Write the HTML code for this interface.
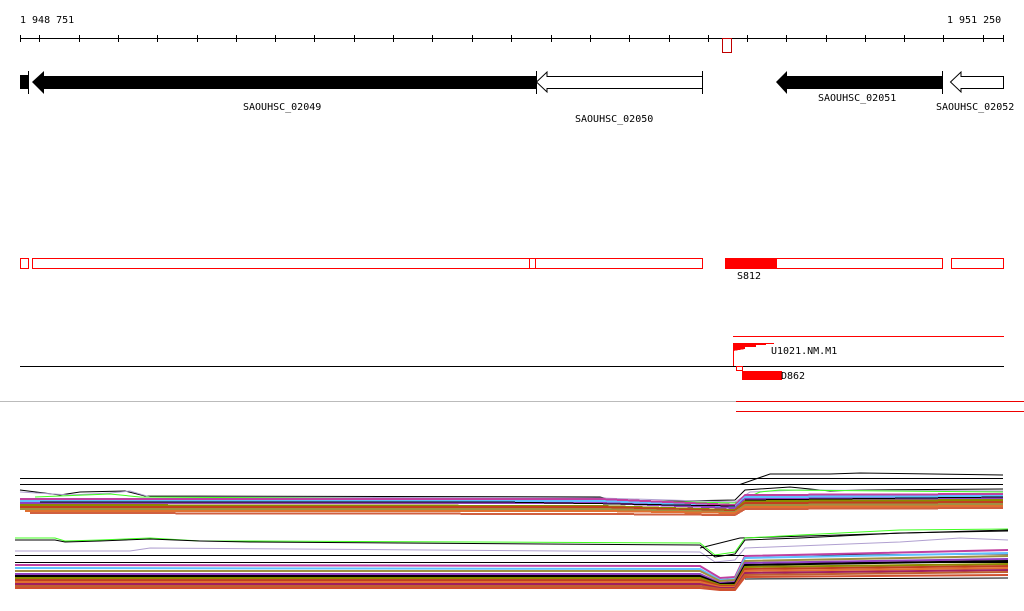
<!DOCTYPE html>
<html><head><meta charset="utf-8"><style>
html,body{margin:0;padding:0;background:#fff;width:1024px;height:611px;overflow:hidden}
svg{display:block}
text{font-family:"DejaVu Sans Mono","Liberation Mono",monospace;font-size:10px;fill:#000}
</style></head><body>
<svg width="1024" height="611" viewBox="0 0 1024 611" xmlns="http://www.w3.org/2000/svg" shape-rendering="crispEdges">
<text x="20" y="23">1 948 751</text>
<text x="947" y="23">1 951 250</text>
<line x1="20" y1="38.5" x2="1004" y2="38.5" stroke="#000"/>
<g stroke="#000">
<line x1="20.5" y1="35" x2="20.5" y2="42"/><line x1="1003.5" y1="35" x2="1003.5" y2="42"/>
<line x1="39.5" y1="35" x2="39.5" y2="42"/><line x1="79.5" y1="35" x2="79.5" y2="42"/><line x1="118.5" y1="35" x2="118.5" y2="42"/><line x1="157.5" y1="35" x2="157.5" y2="42"/><line x1="197.5" y1="35" x2="197.5" y2="42"/><line x1="236.5" y1="35" x2="236.5" y2="42"/><line x1="275.5" y1="35" x2="275.5" y2="42"/><line x1="314.5" y1="35" x2="314.5" y2="42"/><line x1="354.5" y1="35" x2="354.5" y2="42"/><line x1="393.5" y1="35" x2="393.5" y2="42"/><line x1="432.5" y1="35" x2="432.5" y2="42"/><line x1="472.5" y1="35" x2="472.5" y2="42"/><line x1="511.5" y1="35" x2="511.5" y2="42"/><line x1="551.5" y1="35" x2="551.5" y2="42"/><line x1="590.5" y1="35" x2="590.5" y2="42"/><line x1="629.5" y1="35" x2="629.5" y2="42"/><line x1="669.5" y1="35" x2="669.5" y2="42"/><line x1="708.5" y1="35" x2="708.5" y2="42"/><line x1="747.5" y1="35" x2="747.5" y2="42"/><line x1="786.5" y1="35" x2="786.5" y2="42"/><line x1="826.5" y1="35" x2="826.5" y2="42"/><line x1="865.5" y1="35" x2="865.5" y2="42"/><line x1="904.5" y1="35" x2="904.5" y2="42"/><line x1="943.5" y1="35" x2="943.5" y2="42"/><line x1="983.5" y1="35" x2="983.5" y2="42"/>
</g>
<rect x="722.5" y="38.5" width="9" height="14" fill="#fff" stroke="#c00000"/>

<!-- genes -->
<rect x="20" y="75" width="8" height="14" fill="#000"/>
<line x1="28.5" y1="71" x2="28.5" y2="94" stroke="#000"/>
<polygon points="32,82 44,71 44,76 536,76 536,89 44,89 44,94" fill="#000" shape-rendering="auto"/>
<polygon points="536.5,82 547,72 547,76.5 702.5,76.5 702.5,88.5 547,88.5 547,92" fill="#fff" stroke="#000" shape-rendering="auto"/>
<line x1="536.5" y1="71" x2="536.5" y2="94" stroke="#000"/>
<line x1="702.5" y1="71" x2="702.5" y2="94" stroke="#000"/>
<polygon points="776,82 787,71 787,76 942,76 942,89 787,89 787,94" fill="#000" shape-rendering="auto"/>
<line x1="942.5" y1="71" x2="942.5" y2="94" stroke="#000"/>
<polygon points="950.5,82 961,72 961,76.5 1003.5,76.5 1003.5,88.5 961,88.5 961,92" fill="#fff" stroke="#000" shape-rendering="auto"/>
<text x="243" y="110">SAOUHSC_02049</text>
<text x="575" y="122">SAOUHSC_02050</text>
<text x="818" y="101">SAOUHSC_02051</text>
<text x="936" y="110">SAOUHSC_02052</text>

<!-- red boxes -->
<g fill="#fff" stroke="#f00">
<rect x="20.5" y="258.5" width="8" height="10"/>
<rect x="32.5" y="258.5" width="497" height="10"/>
<rect x="529.5" y="258.5" width="6" height="10"/>
<rect x="535.5" y="258.5" width="167" height="10"/>
<rect x="725.5" y="258.5" width="217" height="10"/>
<rect x="951.5" y="258.5" width="52" height="10"/>
</g>
<rect x="725" y="258" width="52" height="11" fill="#f00"/>
<text x="737" y="279">S812</text>

<line x1="733" y1="336.5" x2="1004" y2="336.5" stroke="#f00"/>
<polygon points="733,343 774,343 774,344 766,344 766,345 756,345 756,347 745,347 745,349 733,351" fill="#f00"/>
<line x1="733.5" y1="343" x2="733.5" y2="366" stroke="#f00"/>
<text x="771" y="354">U1021.NM.M1</text>
<line x1="20" y1="366.5" x2="1004" y2="366.5" stroke="#000"/>
<rect x="736.5" y="366.5" width="6" height="4" fill="#fff" stroke="#f00"/>
<rect x="742" y="371" width="40" height="9" fill="#f00"/>
<text x="781" y="379">D862</text>

<line x1="0" y1="401.5" x2="1024" y2="401.5" stroke="#999"/>
<line x1="736" y1="401.5" x2="1024" y2="401.5" stroke="#e00"/>
<line x1="0" y1="401.5" x2="736" y2="401.5" stroke="#bbb"/>
<line x1="736" y1="411.5" x2="1024" y2="411.5" stroke="#e00"/>

<!-- upper band -->
<g fill="none" stroke-width="1" shape-rendering="crispEdges">
<polyline points="20,478.5 1003,478.5" stroke="#000"/>
<polyline points="20,484.5 1003,484.5" stroke="#000"/>
<polyline points="740,484.5 770,474 830,474 860,473 1003,475" stroke="#000" shape-rendering="auto"/>
<polyline points="20,490 60,495 80,492 125,491 145,496 600,497 620,502 735,500 745,490 790,487 830,491 860,490 1003,489" stroke="#000" shape-rendering="auto"/>
<polyline points="20,492 70,495 110,493 130,491 150,497 600,498 735,502 750,492 800,490 1003,491" stroke="#b0a0d0" shape-rendering="auto"/>
<polyline points="35,497 110,494 140,497 600,500 735,503 760,492 780,490 1003,492" stroke="#40ff20" shape-rendering="auto"/>
</g>
<g stroke-width="2" fill="none">
<polyline points="20,499 600,499 735,505 745,495 1003,494" stroke="#c040a0"/>
<polyline points="20,501 600,501 735,507 745,497 1003,496" stroke="#60c0ff"/>
<polyline points="20,503 600,503 735,508 745,499 1003,498" stroke="#9040c0"/>
<polyline points="20,505 600,506 735,510 745,501 1003,500" stroke="#8b8b00"/>
<polyline points="20,507 600,507 735,511 745,503 1003,502" stroke="#c04020"/>
<polyline points="20,509 600,509 735,512 745,505 1003,504" stroke="#a09040"/>
<polyline points="25,511 600,511 735,513 745,507 1003,506" stroke="#e07030"/>
<polyline points="30,513 600,514 735,515 745,509 1003,508" stroke="#d06040"/>
<polyline points="40,502 500,502 735,506" stroke="#000" stroke-width="1"/>
<polyline points="745,500 1003,497" stroke="#000" stroke-width="1"/>
</g>

<!-- lower band -->
<g fill="none" stroke-width="1" shape-rendering="auto">
<polyline points="700,548 740,538 1008,530" stroke="#000"/>
<polyline points="15,538 55,538 65,541 100,540 150,538 200,541 250,541 700,543 715,555 735,552 745,538 800,535 900,530 1008,529" stroke="#40ff20"/>
<polyline points="15,540 55,540 65,542 100,541 150,539 200,541 250,542 700,545 715,557 735,554 745,540 800,538 900,533 1008,531" stroke="#000"/>
<polyline points="15,551 130,551 150,548 700,552 715,562 735,560 745,548 900,542 960,538 1008,540" stroke="#b0a0d0"/>
<polyline points="15,555.5 740,555.5 1008,554" stroke="#000"/>
<polyline points="15,562.5 1008,562.5" stroke="#000"/>
</g>
<g stroke-width="2" fill="none" shape-rendering="auto">
<polyline points="15,565 700,566 720,578 735,577 745,556 1008,550" stroke="#c040a0"/>
<polyline points="15,568 700,569 720,580 735,579 745,558 1008,553" stroke="#60c0ff"/>
<polyline points="15,571 700,571 720,581 735,580 745,561 1008,556" stroke="#a09040"/>
<polyline points="15,574 700,574 720,583 735,582 745,563 1008,559" stroke="#9040c0"/>
<polyline points="15,576 700,576 720,584 735,583 745,565 1008,561" stroke="#000"/>
<polyline points="15,578 700,578 720,585 735,585 745,567 1008,564" stroke="#8b8b00"/>
<polyline points="15,580 700,580 720,586 735,586 745,569 1008,566" stroke="#c04020"/>
<polyline points="15,582 700,582 720,587 735,587 745,571 1008,568" stroke="#e07030"/>
<polyline points="15,584 700,584 720,588 735,588 745,573 1008,570" stroke="#a02060"/>
<polyline points="15,586 700,586 720,589 735,589 745,575 1008,572" stroke="#c06030"/>
<polyline points="15,588 700,588 720,590 735,590 745,577 1008,575" stroke="#d05030"/>
<polyline points="745,579 1008,578" stroke="#000" stroke-width="1"/>
</g>
</svg>
</body></html>
